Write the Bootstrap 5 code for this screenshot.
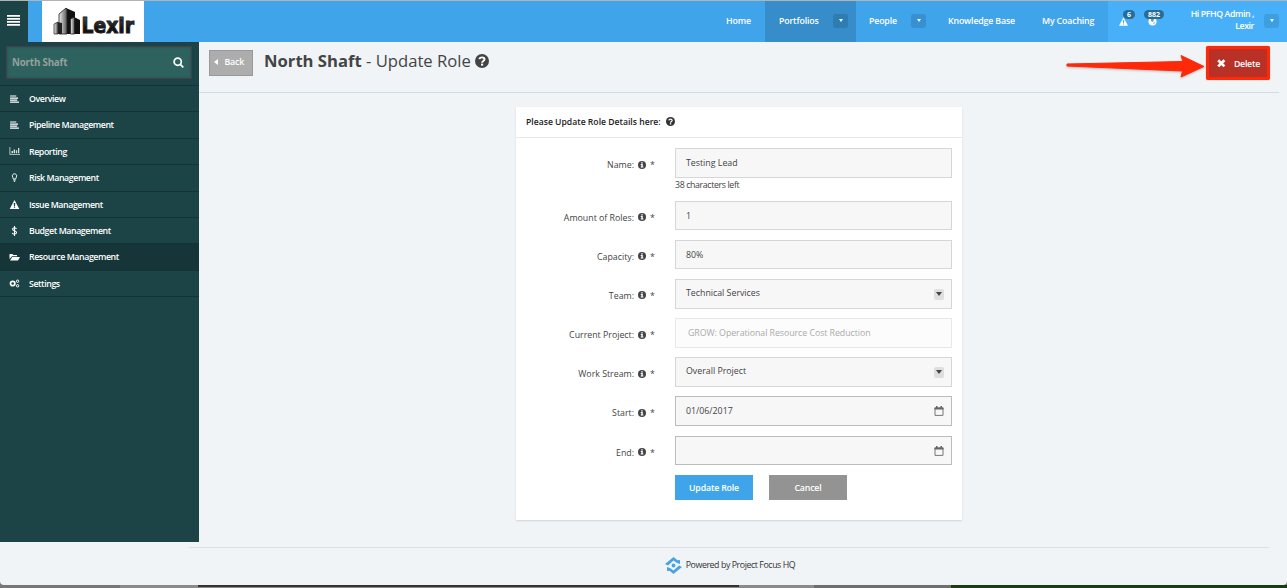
<!DOCTYPE html>
<html lang="en">
<head>
<meta charset="utf-8">
<title>North Shaft - Update Role</title>
<meta name="viewport" content="width=device-width, initial-scale=1">
<link href="https://cdn.jsdelivr.net/npm/bootstrap@5.3.0/dist/css/bootstrap.min.css" rel="stylesheet">
<style>
html,body{height:588px;overflow:hidden}
body{font-family:"Open Sans",sans-serif;font-size:8.8px;line-height:12px;color:#444;background:#777}
svg{display:block;flex:none}
.window{height:585px;background:#f0f4f7;border-top:1px solid #b3b3b3;border-radius:0 0 4px 4px}
.desktop{height:3px;background:linear-gradient(#333 0 2px,#8f8a86 2px) 198px 0/541px 3px no-repeat,linear-gradient(#173a10,#1c3f12) 951px 0/336px 3px no-repeat,linear-gradient(90deg,#777 0 120px,#8b8b8b 120px 198px,#8b8b8b 739px 814px,#6e6e6e 814px)}
.topbar{height:41px;background:#40a4ea;color:#fff;font-weight:600;padding:0}
.burger{width:28px;height:41px;background:#1c4446;padding:0 0 2px 7px}
.brand-box{width:102px;height:41px;margin-left:14px;background:#fff}
.topbar .nav-link{color:#fff;padding:0 0 2px;height:41px;display:flex;align-items:center;letter-spacing:-.16px}
.chip{width:15px;height:14px;border-radius:3px;background:#3690d2;display:flex;align-items:center;justify-content:center}
.chip:before{content:"";border:2.5px solid transparent;border-top:3px solid #fff;border-bottom:0}
.picked{background:#368dc9}.picked .chip{background:#2d7db3}
.userzone{width:179px;height:41px;background:#48b0f9;padding-bottom:2px;letter-spacing:-.42px}
.userzone .chip{background:#3e9fe0}
.bell{width:20px;height:20px}
.count{position:absolute;height:9px;border-radius:5px;background:#276b97;font-size:7px;line-height:9px;font-weight:700;text-align:center;letter-spacing:0}
.sidebar{width:199px;height:500px;background:#1c4446}
.finder{height:33px;margin:4px 7px 6px 6px;border:1px solid #453e4b;background:#2e625f;box-shadow:inset 0 0 3px #1f5353;padding:0 7px 0 5px;color:#97a09c;font-size:9.7px;font-weight:700;letter-spacing:-.15px}
.sidebar .side-link{height:26.4px;border-top:1px solid #143337;color:#fff;font-weight:600;padding:.8px 0 0 9px;gap:9px;line-height:12px;letter-spacing:-.42px}
.sidebar .side-link svg{margin-top:-1px}
.sidebar .side-link.current{background:#153538;padding-top:0}
.main{height:500px}
.titlebar{height:51px;border-bottom:1px solid #cfdce1;margin-right:8px;padding-left:10px}
.back{width:44px;height:26px;background:#adadad;border:1px solid #999;border-radius:0;color:#fff;font-size:8.8px;font-weight:600;padding:0 8px 3px 4px;margin-top:8px;line-height:12px;letter-spacing:-.2px}
h1{font-size:16.65px;line-height:22px;margin:8px 0 0 11px;color:#444}
.delete{width:64px;height:34px;background:#b93026;border:3px solid #fd2909;border-radius:2px;color:#fff;font-size:8.8px;font-weight:600;padding:1px 7px 0 8px;line-height:12px;margin:4px 9px 0 0;box-shadow:0 0 1px #fa5b43;letter-spacing:-.25px}
.role-card{width:446px;height:413px;margin:14px 0 0 317px;background:#fff;border:0;border-radius:1px;box-shadow:0 1px 2px #ccd4da}
.role-card .card-header{height:31px;padding:0 10px;background:#fff;border-bottom:1px solid #e8e8e8;font-weight:600;color:#222;font-size:8.65px}
.fields{padding:10px 10px 0 0}
.field{height:39.1px}
.field.tall{height:52.8px}
.field.last{margin-top:.5px}
.field label{width:118px;text-align:right;padding-top:11px}
.field .info{margin:12.5px 0 0 4px}
.star{width:29px;padding:11px 0 0 4px}
.field .form-control{width:277px;height:29.6px;border:1px solid #d6d6d6;border-radius:0;background:#f7f7f7;padding:0 8px 0 10px;font-size:8.8px;line-height:12px;color:#444}
.field .form-control.pick{padding-bottom:1px}
.field .form-control.date{border-color:#bcbcbc}
.field .form-control.off{background:#fcfcfc;border-color:#e8e8e8;color:#aaa;padding:0 8px 0 12px;letter-spacing:-.05px}
.toggle{width:10px;height:11px;border-radius:2px;background:#dedede;display:flex;align-items:center;justify-content:center;margin:2px -1px 0 0}
.toggle:before{content:"";border:3px solid transparent;border-top:4px solid #444;border-bottom:0}
.date svg{margin-right:-1px}
.act{width:78px;height:25px;border:0;border-radius:0;color:#fff;font-size:8.8px;font-weight:600;padding:1px 0 0;line-height:12px;letter-spacing:-.18px}
.act.save{background:#40a4ea}.act.cancel{background:#939393}
.foot{margin:5px 18px 0 189px;height:36px;border-top:1px solid #dadfe3;color:#333;padding-left:2px;letter-spacing:-.42px}
</style>
</head>
<body>
<svg width="0" height="0" class="position-absolute">
<symbol id="lines" viewBox="0 0 10 9"><path d="M0 .5h7v1.300H0zM0 2.800h9v1.300H0zM0 5.100h8v1.300H0zM0 7.400h10v1.200H0z"/></symbol>
<symbol id="info" viewBox="0 0 16 16"><circle cx="8" cy="8" r="8"/><path fill="#fff" d="M6.500 2.400h3v2.400h-3zM5.400 6h4.100v5h1.300v2H5.400v-2h1.300V8H5.400z"/></symbol>
<symbol id="help" viewBox="0 0 16 16"><circle cx="8" cy="8" r="8"/><path fill="none" stroke="#fff" stroke-width="2.200" d="M5 5.900C5.400 3.300 10.900 3 10.900 6.100 10.900 8 8.100 7.900 8.100 10"/><path fill="#fff" d="M6.900 11h2.400v2.300H6.900z"/></symbol>
<symbol id="warn" viewBox="0 0 16 15"><path fill-rule="evenodd" d="M8 0l8 15H0zM6.700 5l.4 5h1.800l.4-5zM6.900 11v2h2.200v-2z"/></symbol>
<symbol id="cal" viewBox="0 0 10 10"><path fill="none" stroke="#777" d="M1 2h8v7.400H1z"/><path fill="#666" d="M.5 1.500h9v2h-9zM2 0h1.500v2H2zM6.500 0H8v2H6.500z"/></symbol>
</svg>

<div class="window">
  <nav class="navbar topbar flex-nowrap justify-content-start">
    <div class="burger d-flex align-items-center"><svg width="13" height="11" fill="#fff"><path d="M0 0h13v1.700H0zM0 3h13v1.700H0zM0 6h13v1.700H0zM0 9h13v1.700H0z"/></svg></div>
    <div class="brand-box">
      <svg width="102" height="41" viewBox="42 1 102 41">
        <defs><linearGradient id="steel" x2="1"><stop stop-color="#eee"/><stop offset="1" stop-color="#555"/></linearGradient><linearGradient id="ink" x2="0" y2="1"><stop stop-color="#555"/><stop offset=".6" stop-color="#111"/></linearGradient></defs>
        <path d="M66 8l9 4v22h-9z" fill="#111"/><path d="M66 8l-7 6v20h8V9z" fill="url(#steel)" stroke="#222" stroke-width=".8"/>
        <path d="M57 22l5 1v11h-5z" fill="#222"/><path d="M54 24l4-2v12h-4z" fill="url(#steel)" stroke="#222" stroke-width=".7"/>
        <path d="M74 17l6 3v14h-6z" fill="#111"/><path d="M70.500 19l4-2v17h-4z" fill="url(#steel)" stroke="#222" stroke-width=".8"/>
        <text x="81.500" y="33" font-family="'DejaVu Sans', sans-serif" font-weight="700" font-size="20.500" textLength="52.500" lengthAdjust="spacingAndGlyphs" fill="url(#ink)" stroke="#222" stroke-width="1">Lexir</text>
      </svg>
    </div>
    <div class="d-flex ms-auto">
      <a class="nav-link" style="width:39px">Home</a>
      <a class="nav-link picked" style="width:91px;padding-left:14px"><span style="width:54px">Portfolios</span><span class="chip"></span></a>
      <a class="nav-link" style="width:92px;padding-left:13px"><span style="width:42px">People</span><span class="chip"></span></a>
      <a class="nav-link" style="width:94px">Knowledge Base</a>
      <a class="nav-link" style="width:66px">My Coaching</a>
      <div class="userzone d-flex align-items-center">
        <span class="bell position-relative" style="margin-left:10px"><svg class="position-absolute" style="left:1px;top:6px" width="9" height="9" fill="#fff"><use href="#warn"/></svg><b class="count" style="left:5px;top:-1px;width:12px">6</b></span>
        <span class="bell position-relative" style="margin-left:6px"><svg class="position-absolute" style="left:4px;top:6px" width="9" height="9"><circle cx="4.500" cy="4.500" r="4" fill="#fff"/><path fill="#48a0dd" d="M3 1l3 1-1 3-2-1zM5 6l2-1-1 2z"/></svg><b class="count" style="left:0;top:-1px;width:20px">882</b></span>
        <span class="text-end ms-auto" style="margin:-1px 10px 0 0">Hi PFHQ Admin ,<br>Lexir</span>
        <span class="chip" style="margin-right:8px"></span>
      </div>
    </div>
  </nav>

  <div class="d-flex">
    <aside class="sidebar">
      <div class="finder d-flex align-items-center justify-content-between"><span>North Shaft</span><svg width="11" height="11" fill="none" stroke="#fff" stroke-width="1.700"><circle cx="4.700" cy="4.700" r="3.600"/><path d="M7.300 7.300l3 3"/></svg></div>
      <nav class="nav flex-column flex-nowrap">
        <a class="side-link nav-link d-flex align-items-center"><svg width="11" height="8" fill="#fff"><use href="#lines"/></svg>Overview</a>
        <a class="side-link nav-link d-flex align-items-center"><svg width="11" height="8" fill="#fff"><use href="#lines"/></svg>Pipeline Management</a>
        <a class="side-link nav-link d-flex align-items-center"><svg width="11" height="8" fill="#d5dcdc"><path d="M.5 0h.8v7H11v.8H.5zM2.500 4H4v2.300H2.500zM4.600 2.500H6v3.800H4.600zM6.800 3.300h1.400v3H6.800zM9 1h1.300v5.300H9z"/></svg>Reporting</a>
        <a class="side-link nav-link d-flex align-items-center"><svg width="11" height="9" fill="none" stroke="#fff"><path d="M4.300 6C4.300 4.700 3.300 4.200 3.300 2.900c0-2.800 4.400-2.800 4.400 0C7.700 4.200 6.700 4.700 6.700 6z" stroke-width=".9"/><path d="M4.300 7h2.400M4.800 8.300h1.400"/></svg>Risk Management</a>
        <a class="side-link nav-link d-flex align-items-center"><svg width="11" height="9" fill="#fff"><use href="#warn"/></svg>Issue Management</a>
        <a class="side-link nav-link d-flex align-items-center"><svg width="11" height="10" fill="none" stroke="#fff" stroke-width="1.100"><path d="M7.400 3C7 1.300 3.600 1.300 3.600 3.200c0 1.800 3.900 1.300 3.900 3.300 0 2-3.700 2.100-4.200.3M5.500 0v10"/></svg>Budget Management</a>
        <a class="side-link current nav-link d-flex align-items-center"><svg width="11" height="8" fill="#fff"><path d="M.5 6V1h3l.8 1H8v1.300H3zM3.300 4H11L9 7.500H1z"/></svg>Resource Management</a>
        <a class="side-link nav-link d-flex align-items-center" style="border-bottom:1px solid #143337;height:27.400px"><svg width="11" height="9" fill="none" stroke="#fff"><circle cx="3.700" cy="4.500" r="2.200" stroke-width="1.700"/><circle cx="8.600" cy="2.200" r="1.200"/><circle cx="8.600" cy="6.800" r="1.200"/></svg>Settings</a>
      </nav>
    </aside>

    <main class="main flex-grow-1">
      <div class="titlebar d-flex align-items-start">
        <button class="btn back d-flex align-items-center justify-content-between"><svg width="4" height="6" fill="#fff"><path d="M4 0v6L0 3z"/></svg><span>Back</span></button>
        <h1 class="fw-normal d-flex align-items-center"><span><b>North Shaft</b> - Update Role</span><svg class="ms-1" width="14" height="14" fill="#444"><use href="#help"/></svg></h1>
        <svg class="ms-auto" style="margin:10px -1px 0 0" width="144" height="30"><path fill="#fd2909" stroke="#fd2909" stroke-linejoin="round" d="M4 12l116-2.500-2-6L141 14.500 118 25l1.500-6L4 14z" style="filter:drop-shadow(0 1px 1px #8888)"/></svg>
        <button class="btn delete d-flex align-items-center justify-content-between"><svg width="9" height="9" stroke="#fff" stroke-width="2.700"><path d="M1.200 1.200l6.200 6.200M7.400 1.200L1.200 7.400"/></svg><span>Delete</span></button>
      </div>

      <section class="card role-card">
        <div class="card-header d-flex align-items-center"><span>Please Update Role Details here:</span><svg style="margin:-1px 0 0 5px" width="9" height="9" fill="#333"><use href="#help"/></svg></div>
        <form class="fields">
          <div class="field tall d-flex"><label>Name:</label><svg class="info" width="8" height="8" fill="#444"><use href="#info"/></svg><span class="star">*</span><div><div class="form-control d-flex align-items-center">Testing Lead</div><div style="margin-top:1px;letter-spacing:-.37px">38 characters left</div></div></div>
          <div class="field d-flex"><label>Amount of Roles:</label><svg class="info" width="8" height="8" fill="#444"><use href="#info"/></svg><span class="star">*</span><div class="form-control d-flex align-items-center">1</div></div>
          <div class="field d-flex"><label>Capacity:</label><svg class="info" width="8" height="8" fill="#444"><use href="#info"/></svg><span class="star">*</span><div class="form-control d-flex align-items-center">80%</div></div>
          <div class="field d-flex"><label>Team:</label><svg class="info" width="8" height="8" fill="#444"><use href="#info"/></svg><span class="star">*</span><div class="form-control pick d-flex align-items-center justify-content-between">Technical Services<span class="toggle"></span></div></div>
          <div class="field d-flex"><label>Current Project:</label><svg class="info" width="8" height="8" fill="#444"><use href="#info"/></svg><span class="star">*</span><div class="form-control off d-flex align-items-center">GROW: Operational Resource Cost Reduction</div></div>
          <div class="field d-flex"><label>Work Stream:</label><svg class="info" width="8" height="8" fill="#444"><use href="#info"/></svg><span class="star">*</span><div class="form-control pick d-flex align-items-center justify-content-between">Overall Project<span class="toggle"></span></div></div>
          <div class="field d-flex"><label>Start:</label><svg class="info" width="8" height="8" fill="#444"><use href="#info"/></svg><span class="star">*</span><div class="form-control date d-flex align-items-center justify-content-between">01/06/2017<svg width="10" height="10"><use href="#cal"/></svg></div></div>
          <div class="field last d-flex"><label>End:</label><svg class="info" width="8" height="8" fill="#444"><use href="#info"/></svg><span class="star">*</span><div class="form-control date d-flex align-items-center justify-content-end"><svg width="10" height="10"><use href="#cal"/></svg></div></div>
          <div class="d-flex gap-3" style="margin-left:159px"><button type="button" class="btn act save">Update Role</button><button type="button" class="btn act cancel">Cancel</button></div>
        </form>
      </section>
    </main>
  </div>

  <footer class="foot d-flex align-items-center justify-content-center"><svg width="17" height="17" viewBox="0 0 17 17" fill="#4aa3df"><path d="M0 7l8.500-7 4 3.300L15 3v4l-3-1-3.500-2.500L3 8.500zM17 10l-8.500 7-4-3.300L2 14v-4l3 1 3.500 2.500L14 8.500z"/><circle cx="8.500" cy="8.500" r="1.900"/></svg><span style="margin:-1px 0 0 4px">Powered by Project Focus HQ</span></footer>
</div>
<div class="desktop"></div>
<script src="https://cdn.jsdelivr.net/npm/bootstrap@5.3.0/dist/js/bootstrap.bundle.min.js"></script>
</body>
</html>
